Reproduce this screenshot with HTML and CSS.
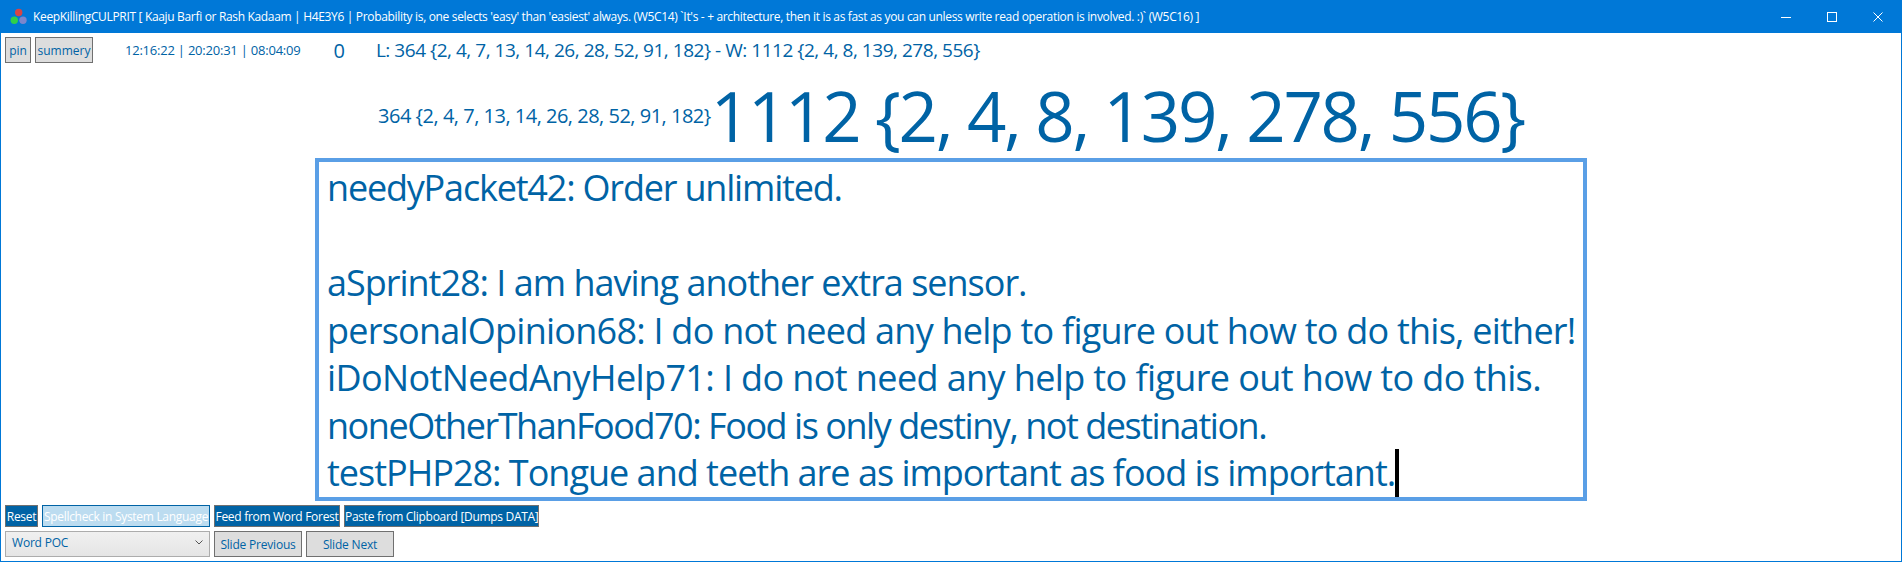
FILE: index.html
```html
<!DOCTYPE html>
<html lang="en">
<head>
    <meta charset="UTF-8">
    <title>KeepKillingCULPRIT</title>
    <link rel="stylesheet" href="styles.css">
</head>
<body>
    <div class="window">
        <header class="titlebar">
            <svg class="app-icon" width="20" height="20" viewBox="0 0 20 20">
                <circle cx="10.7" cy="5.5" r="3.7" fill="#d64545"/>
                <circle cx="6.3" cy="13.2" r="3.7" fill="#2fd04a"/>
                <circle cx="15" cy="13.2" r="3.7" fill="#7a86cc"/>
            </svg>
            <span class="title-text">KeepKillingCULPRIT [ Kaaju Barfi or Rash Kadaam | H4E3Y6 | Probability is, one selects 'easy' than 'easiest' always. (W5C14) `It's - + architecture, then it is as fast as you can unless write read operation is involved. :)` (W5C16) ]</span>
            <div class="window-controls">
                <div class="control"><svg width="10" height="10" viewBox="0 0 10 10"><path d="M0 5.5H10" stroke="#fff" fill="none"/></svg></div>
                <div class="control"><svg width="10" height="10" viewBox="0 0 10 10"><rect x="0.5" y="0.5" width="9" height="9" stroke="#fff" fill="none"/></svg></div>
                <div class="control"><svg width="10" height="10" viewBox="0 0 10 10"><path d="M0.5 0.5L9.5 9.5M9.5 0.5L0.5 9.5" stroke="#fff" fill="none"/></svg></div>
            </div>
        </header>

        <main class="content">
            <div class="top-row">
                <button class="btn btn-pin">pin</button>
                <button class="btn btn-summery">summery</button>
                <span class="times">12:16:22 | 20:20:31 | 08:04:09</span>
                <span class="counter">0</span>
                <span class="stats">L: 364 {2, 4, 7, 13, 14, 26, 28, 52, 91, 182} - W: 1112 {2, 4, 8, 139, 278, 556}</span>
            </div>

            <div class="score-row">
                <span class="score-small">364 {2, 4, 7, 13, 14, 26, 28, 52, 91, 182}</span>
                <span class="score-big">1112 {2, 4, 8, 139, 278, 556}</span>
            </div>

            <div class="editor">
                <div class="line line-order">needyPacket42: Order unlimited.</div>
                <div class="line">&nbsp;</div>
                <div class="line line-sensor">aSprint28: I am having another extra sensor.</div>
                <div class="line">personalOpinion68: I do not need any help to figure out how to do this, either!</div>
                <div class="line line-help">iDoNotNeedAnyHelp71: I do not need any help to figure out how to do this.</div>
                <div class="line line-food">noneOtherThanFood70: Food is only destiny, not destination.</div>
                <div class="line line-teeth">testPHP28: Tongue and teeth are as important as food is important.<span class="caret"></span></div>
            </div>

            <div class="footer">
                <div class="action-row">
                    <button class="action action-reset">Reset</button>
                    <button class="action action-off">Spellcheck in System Language</button>
                    <button class="action action-feed">Feed from Word Forest</button>
                    <button class="action action-paste">Paste from Clipboard [Dumps DATA]</button>
                </div>
                <div class="slide-row">
                    <div class="select">
                        <span>Word POC</span>
                        <svg width="8" height="5" viewBox="0 0 8 5"><path d="M0.5 0.5L4 4L7.5 0.5" stroke="#555" fill="none"/></svg>
                    </div>
                    <button class="btn btn-slide">Slide Previous</button>
                    <button class="btn btn-slide">Slide Next</button>
                </div>
            </div>
        </main>
    </div>
</body>
</html>
```

FILE: styles.css
```css
* {
    box-sizing: border-box;
}
html, body {
    margin: 0;
    padding: 0;
}
body {
    font-family: "Open Sans", "Noto Sans", sans-serif;
    color: #0063a5;
    background: #fff;
}
button {
    font-family: inherit;
    padding: 0;
}
.window {
    width: 1902px;
    height: 562px;
    border: 1px solid #0078d7;
    border-top: 0;
    display: flex;
    flex-direction: column;
    overflow: hidden;
}
.titlebar {
    height: 33px;
    flex: none;
    background: #0078d7;
    color: #fff;
    display: flex;
    align-items: center;
    padding-left: 8px;
    margin: 0 -1px;
}
.app-icon {
    margin-right: 5px;
}
.title-text {
    font-size: 12px;
    letter-spacing: -0.33px;
    white-space: nowrap;
    flex: 1;
}
.window-controls {
    display: flex;
    padding-right: 1px;
}
.control {
    width: 46px;
    height: 32px;
    display: flex;
    align-items: center;
    justify-content: center;
}
.content {
    flex: 1;
    display: flex;
    flex-direction: column;
    padding: 4px 4px 4px;
}
.top-row {
    display: flex;
    align-items: center;
    height: 26px;
    flex: none;
}
.btn {
    background: #ddd;
    border: 1px solid #707070;
    color: #0063a5;
    font-size: 12px;
    height: 26px;
    white-space: nowrap;
}
.btn-pin {
    width: 26px;
    margin-right: 4px;
}
.btn-summery {
    width: 58px;
}
.times {
    font-size: 13px;
    letter-spacing: -0.22px;
    margin-left: 32px;
}
.counter {
    font-size: 20px;
    margin-left: 33px;
}
.stats {
    font-size: 19px;
    letter-spacing: -0.47px;
    margin-left: 31px;
}
.score-row {
    display: flex;
    justify-content: center;
    align-items: center;
    height: 95px;
    flex: none;
}
.score-small {
    font-size: 20px;
    letter-spacing: -0.5px;
    margin-top: 9px;
}
.score-big {
    font-size: 69px;
    letter-spacing: -2.3px;
    line-height: 90px;
    margin-top: 9px;
}
.editor {
    width: 1272px;
    height: 343px;
    flex: none;
    margin-left: 310px;
    border: 4px solid #5a9fe6;
    padding: 2px 8px;
    font-size: 36px;
    letter-spacing: -0.76px;
    line-height: 47.5px;
    white-space: nowrap;
}
.line-order {
    letter-spacing: -1.19px;
}
.line-sensor {
    letter-spacing: -1.01px;
}
.line-help {
    letter-spacing: -0.61px;
}
.line-food {
    letter-spacing: -1.46px;
}
.line-teeth {
    letter-spacing: -1px;
}
.caret {
    display: inline-block;
    width: 4px;
    height: 48px;
    background: #000;
    vertical-align: -11px;
}
.footer {
    margin-top: 4px;
    display: flex;
    flex-direction: column;
    gap: 4px;
}
.action-row {
    display: flex;
    gap: 4px;
}
.action {
    height: 22px;
    background: #0063a5;
    color: #fff;
    border: 1px solid #707070;
    font-size: 12px;
    letter-spacing: -0.3px;
    padding: 0;
    white-space: nowrap;
}
.action-reset {
    width: 33px;
}
.action-off {
    width: 168px;
    background: #bcdcf0;
    border-color: #0063a5;
    color: #fff;
}
.action-feed {
    width: 126px;
}
.action-paste {
    width: 195px;
}
.slide-row {
    display: flex;
    gap: 4px;
}
.select {
    width: 205px;
    height: 26px;
    background: linear-gradient(#f0f0f0, #e5e5e5);
    border: 1px solid #acacac;
    font-size: 12px;
    letter-spacing: -0.2px;
    padding: 0 6px 3px 6px;
    display: flex;
    align-items: center;
    justify-content: space-between;
}
.btn-slide {
    width: 88px;
    letter-spacing: -0.2px;
}
```
